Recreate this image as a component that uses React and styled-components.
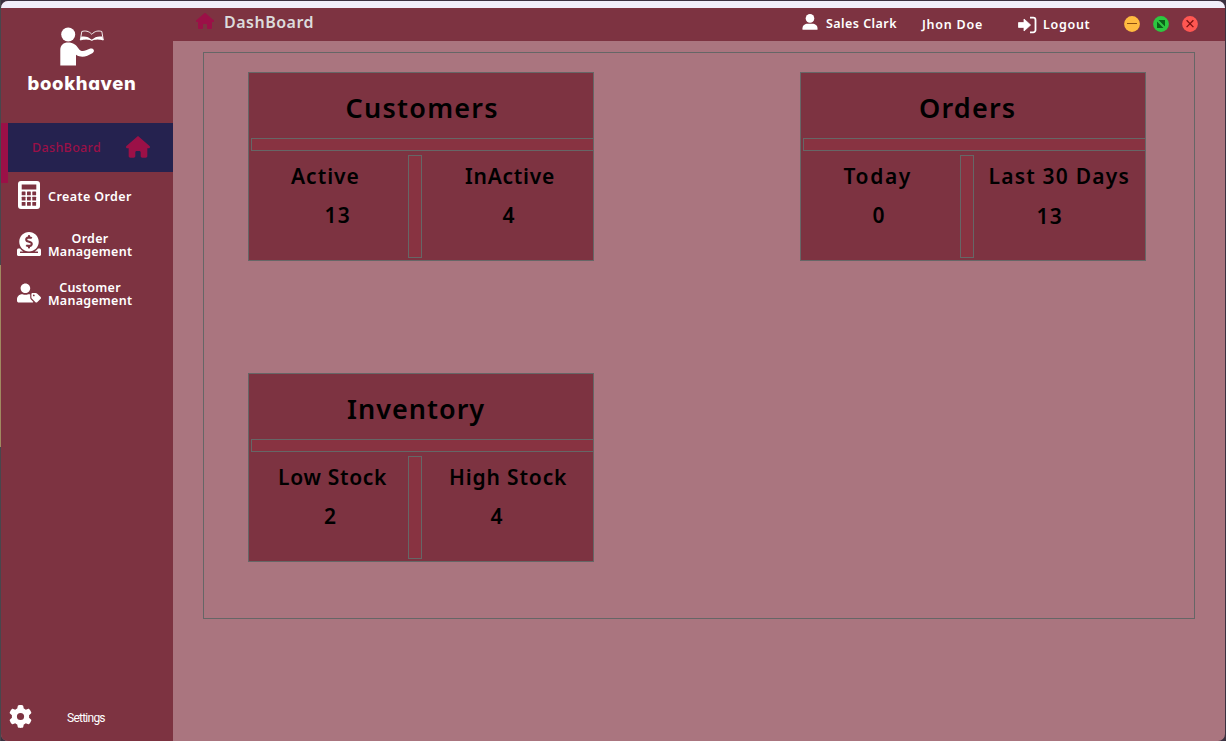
import React from 'react';
import styled, { createGlobalStyle } from 'styled-components';
import { FaHouse, FaGear } from 'react-icons/fa6';
import { FaDonate, FaUserTag } from 'react-icons/fa';

const maroon = '#7d3341';
const crimson = '#9b1047';
const line = '#666666';

const Global = createGlobalStyle`
  * { box-sizing: border-box; }
  body { margin: 0; background: #413440; overflow: hidden; }
`;

const Desktop = styled.div`
  width: 1226px;
  height: 741px;
  padding: 1px 1px 0 1px;
  background: linear-gradient(#47474d 0 265px, #a08a60 265px 447px, #47474d 447px) 0 0 / 1px 100% no-repeat, #3b3140;
  font-family: 'Noto Sans', 'Open Sans', sans-serif;
  font-weight: 600;
`;

const Window = styled.div`
  display: flex;
  flex-direction: column;
  height: 740px;
  border-radius: 7px;
  overflow: hidden;
  background: #aa757f;
`;

const Strip = styled.div`
  height: 7px;
  flex: none;
  background: #f1effa;
`;

const Main = styled.div`
  display: flex;
  flex: 1;
`;

const Sidebar = styled.nav`
  display: flex;
  flex-direction: column;
  width: 172px;
  background: ${maroon};
  color: #fff;
`;

const Brand = styled.div`
  height: 115px;
  padding: 19px 0 0 26.5px;
  svg { display: block; margin-left: 29px; }
`;

const BrandName = styled.div`
  margin-top: 5px;
  font: 800 18.5px/22px Inter, Lato, sans-serif;
  font-feature-settings: 'cv11';
  letter-spacing: 0.65px;
  white-space: nowrap;
`;

const Nav = styled.div`
  display: flex;
  align-items: flex-start;
`;

const Marker = styled.div`
  width: 7px;
  height: 60px;
  background: ${crimson};
`;

const NavItems = styled.div`
  flex: 1;
`;

const NavItem = styled.div`
  display: flex;
  align-items: center;
  gap: ${p => p.$gap}px;
  height: 49px;
  padding: 0 0 ${p => p.$lift || 2}px ${p => (p.$active ? 24 : p.$left || 9)}px;
  background: ${p => (p.$active ? '#25224f' : 'transparent')};
  color: ${p => (p.$active ? crimson : '#fff')};
  svg { flex: none; }
`;

const NavText = styled.div`
  width: ${p => p.$w || 84}px;
  padding-top: 2px;
  font-size: 12.5px;
  font-weight: ${p => p.$weight || 600};
  line-height: 13px;
  letter-spacing: ${p => p.$ls || 0.25}px;
  text-align: center;
  white-space: pre;
`;

const Settings = styled.div`
  display: flex;
  align-items: center;
  gap: 35px;
  margin-top: auto;
  height: 50px;
  padding-left: 8px;
  font: 400 12px/16px Roboto, sans-serif;
  letter-spacing: -0.75px;
  span { padding-top: 4px; }
`;

const Body = styled.div`
  display: flex;
  flex-direction: column;
  flex: 1;
`;

const Header = styled.header`
  display: flex;
  align-items: center;
  height: 33px;
  background: ${maroon};
  color: #fff;
  svg { flex: none; display: block; }
`;

const HeaderIcon = styled.div`
  margin-left: ${p => p.$left || 0}px;
  margin-right: ${p => p.$right || 0}px;
  padding-bottom: ${p => p.$lift || 0}px;
  color: ${crimson};
`;

const HeaderTitle = styled.h1`
  width: 588px;
  margin: 0;
  padding: 0 0 5px 10px;
  color: #dcdcdc;
  font-size: 16px;
  line-height: 20px;
  font-weight: 600;
  letter-spacing: 0.5px;
`;

const HeaderText = styled.div`
  width: ${p => p.$w}px;
  padding-bottom: ${p => p.$lift || 0}px;
  font-size: 12.5px;
  line-height: 19px;
  letter-spacing: ${p => p.$ls}px;
  white-space: nowrap;
`;

const Controls = styled.div`
  display: flex;
  gap: 13px;
  padding-bottom: 1px;
`;

const Panel = styled.main`
  display: grid;
  grid-template-columns: 346px 346px;
  grid-template-rows: 189px 189px;
  column-gap: 206px;
  row-gap: 112px;
  width: 992px;
  height: 567px;
  margin: 11px 0 0 30px;
  padding: 19px 0 0 44px;
  border: 1px solid ${line};
`;

const CardBox = styled.section`
  display: flex;
  flex-direction: column;
  border: 1px solid ${line};
  background: ${maroon};
  color: #000;
`;

const CardTitle = styled.h2`
  height: 65px;
  margin: 0;
  padding: 16px 0 0 ${p => p.$x}px;
  font-size: 27px;
  line-height: 38px;
  font-weight: 600;
  letter-spacing: ${p => p.$ls}px;
  white-space: nowrap;
`;

const Rule = styled.div`
  height: 13px;
  margin-left: 2px;
  border: 1px solid ${line};
  border-right: 0;
  background: #883341;
`;

const Stats = styled.div`
  display: flex;
`;

const Divider = styled.div`
  width: 14px;
  height: 103px;
  margin-top: 4px;
  border: 1px solid ${line};
  background: #883341;
`;

const Stat = styled.div`
  width: ${p => p.$w}px;
  font-size: 21px;
  white-space: nowrap;
`;

const StatName = styled.div`
  padding: 10px 0 0 ${p => p.$x}px;
  line-height: 30px;
  letter-spacing: ${p => p.$ls}px;
`;

const StatValue = styled.div`
  padding: ${p => 9 + (p.$drop || 0)}px 0 0 ${p => p.$x}px;
  line-height: 30px;
  letter-spacing: ${p => p.$ls || 0}px;
`;

const Logo = () => (
  <svg width="48" height="40" viewBox="0 0 48 40" fill="#fff">
    <circle cx="11.2" cy="7.500" r="7" />
    <path d="M3.3 38.500V23C3.3 18 6.5 15.500 11 15.500c5.500 0 8.200 2.500 10.500 6 2 2.900 4.500 3 7.500 1.800l4.300-1.700c1.600-.6 3 .2 3.500 1.400.4 1.300-.2 2.500-1.500 3.200C30 29.300 25 31.500 19 27.800V38.500z" />
    <path d="M24.800 4.500c3.500-1 7-.6 10 2.800 3-3.400 6.500-3.800 10-2.800l1.500 8.500c-4.200-1.500-8-1.400-11.500.2-3.500-1.600-7.300-1.700-11.500-.2z" fill="none" stroke="#fff" strokeWidth=".9" />
    <path d="M23.300 13l1-3.400c4-.6 7.500 0 10.500 3.400 3-3.400 6.500-4 10.500-3.400l1 3.400c-4.200-1-8-1-11.500.5-3.500-1.500-7.300-1.500-11.500-.5z" />
  </svg>
);

const Calculator = () => (
  <svg width="22" height="28" viewBox="0 0 22 28">
    <rect width="22" height="28" rx="3" fill="#fff" />
    <g fill={maroon}>
      <rect x="3.700" y="3.500" width="14.600" height="5" />
      {[10.500, 15.700, 21].map(y => [3.700, 9, 14.300].map(x => (
        <rect key={x + '-' + y} x={x} y={y} width="3.800" height="3.800" rx=".5" />
      )))}
    </g>
  </svg>
);

const Person = () => (
  <svg width="16" height="16" viewBox="0 0 16 16" fill="#fff">
    <circle cx="8" cy="4.400" r="4.300" />
    <path d="M.5 15.800v-1.500C.5 11.500 3 9.800 5.500 9.800h5c2.500 0 5 1.700 5 4.500v1.500z" />
  </svg>
);

const LogoutIcon = () => (
  <svg width="19" height="18" viewBox="0 0 19 18">
    <path d="M.5 6.600h5.500V3l6.600 6-6.600 6v-3.600H.5z" fill="#fff" stroke="#fff" strokeWidth=".8" strokeLinejoin="round" />
    <path d="M12 1.700h3.200a2.300 2.300 0 0 1 2.300 2.300v10a2.300 2.300 0 0 1-2.300 2.300H12" fill="none" stroke="#fff" strokeWidth="1.800" />
  </svg>
);

const Minimize = () => (
  <svg width="16" height="16" viewBox="0 0 16 16">
    <circle cx="8" cy="8" r="7.900" fill="#ffbb40" />
    <path d="M3 7.500h10" stroke="#8c4f10" strokeWidth="1" />
  </svg>
);

const Maximize = () => (
  <svg width="16" height="16" viewBox="0 0 16 16">
    <circle cx="8" cy="8" r="7.900" fill="#2dc840" />
    <path d="M5.500 4H12v6.500zM4 5.500V12h6.500z" fill="#0a6218" />
  </svg>
);

const Close = () => (
  <svg width="16" height="16" viewBox="0 0 16 16">
    <circle cx="8" cy="8" r="7.900" fill="#ff5752" />
    <path d="M4.600 4.300l6.800 6.800M11.400 4.300l-6.800 6.800" stroke="#7d1010" strokeWidth="1.300" />
  </svg>
);

const Card = ({ title, left, right }) => (
  <CardBox>
    <CardTitle $x={title.x} $ls={title.ls}>{title.text}</CardTitle>
    <Rule />
    <Stats>
      <Stat $w={159}>
        <StatName $x={left.x} $ls={left.ls}>{left.name}</StatName>
        <StatValue $x={left.vx} $ls={left.vls}>{left.value}</StatValue>
      </Stat>
      <Divider />
      <Stat $w={171}>
        <StatName $x={right.x} $ls={right.ls}>{right.name}</StatName>
        <StatValue $x={right.vx} $drop={right.drop} $ls={right.vls}>{right.value}</StatValue>
      </Stat>
    </Stats>
  </CardBox>
);

export default function App() {
  return (
    <Desktop>
      <Global />
      <Window>
        <Strip />
        <Main>
          <Sidebar>
            <Brand>
              <Logo />
              <BrandName>bookhaven</BrandName>
            </Brand>
            <Nav>
              <Marker />
              <NavItems>
                <NavItem $active $gap={25}>
                  <NavText $w={69} $weight={500} $ls={0.35}>DashBoard</NavText>
                  <FaHouse size={24} />
                </NavItem>
                <NavItem $left={10} $gap={8} $lift={3}><Calculator /><NavText $ls={0.4}>Create Order</NavText></NavItem>
                <NavItem $gap={7} $lift={3}><FaDonate size={24} /><NavText>{'Order\nManagement'}</NavText></NavItem>
                <NavItem $gap={7} $lift={3}><FaUserTag size={24} /><NavText>{'Customer\nManagement'}</NavText></NavItem>
              </NavItems>
            </Nav>
            <Settings><FaGear size={23} /><span>Settings</span></Settings>
          </Sidebar>
          <Body>
            <Header>
              <HeaderIcon $left={23} $lift={8}><FaHouse size={18} /></HeaderIcon>
              <HeaderTitle>DashBoard</HeaderTitle>
              <HeaderIcon $right={8} $lift={5}><Person /></HeaderIcon>
              <HeaderText $w={96} $ls={0.45} $lift={2}>Sales Clark</HeaderText>
              <HeaderText $w={96} $ls={0.75}>Jhon Doe</HeaderText>
              <HeaderIcon $right={6}><LogoutIcon /></HeaderIcon>
              <HeaderText $w={81} $ls={0.7}>Logout</HeaderText>
              <Controls><Minimize /><Maximize /><Close /></Controls>
            </Header>
            <Panel>
              <Card
                title={{ text: 'Customers', x: 96.5, ls: 1.25 }}
                left={{ name: 'Active', x: 42, ls: 1, value: '13', vx: 75.5, vls: 1.3 }}
                right={{ name: 'InActive', x: 43, ls: 0.75, value: '4', vx: 80.5 }}
              />
              <Card
                title={{ text: 'Orders', x: 118, ls: 1.2 }}
                left={{ name: 'Today', x: 42.5, ls: 1.6, value: '0', vx: 71.5 }}
                right={{ name: 'Last 30 Days', x: 14.5, ls: 1.2, value: '13', vx: 62.5, drop: 1, vls: 1.3 }}
              />
              <Card
                title={{ text: 'Inventory', x: 98, ls: 1 }}
                left={{ name: 'Low Stock', x: 29, ls: 0.7, value: '2', vx: 75 }}
                right={{ name: 'High Stock', x: 27, ls: 0.85, value: '4', vx: 68.5 }}
              />
            </Panel>
          </Body>
        </Main>
      </Window>
    </Desktop>
  );
}
